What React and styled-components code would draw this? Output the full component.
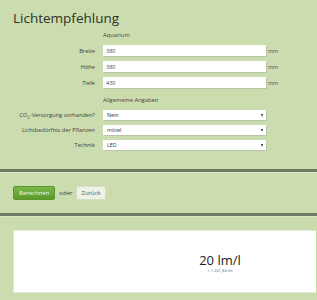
import React from 'react';
import styled, { createGlobalStyle } from 'styled-components';

const GlobalStyle = createGlobalStyle`
  html, body {
    margin: 0;
    padding: 0;
    overflow: hidden;
    background: #cbdcae;
    font-family: "Open Sans", "Liberation Sans", sans-serif;
    color: #3a3a3a;
  }
`;

const Page = styled.div`
  width: 317px;
  min-height: 300px;
  background: #cbdcae;
  overflow: hidden;
`;

const Title = styled.h1`
  margin: 0;
  padding: 9px 0 0 13px;
  font-size: 13.5px;
  line-height: 19px;
  font-weight: 400;
  color: #2e332a;
`;

const Form = styled.div`
  display: grid;
  grid-template-columns: 103px 163px auto;
  align-items: center;
  row-gap: 5px;
  padding-top: 3px;
`;

const Heading = styled.div`
  grid-column: 2 / 4;
  font-size: 5.8px;
  line-height: 9px;
  color: #444;
  margin-top: ${(p) => p.$top || 0}px;
`;

const Label = styled.label`
  grid-column: 1;
  text-align: right;
  padding-right: 8px;
  font-size: 5.7px;
  line-height: 10px;
  color: #3f3f3f;

  sub {
    font-size: 4px;
    line-height: 0;
  }
`;

const Input = styled.input`
  grid-column: 2;
  box-sizing: border-box;
  width: 163px;
  height: 11px;
  margin: 0;
  padding: 0 0 0 3px;
  border: none;
  background: #fff;
  box-shadow: 1px 1px 0 #b9c6a7;
  font-family: inherit;
  font-size: 5.5px;
  color: #444;
  outline: none;
`;

const Unit = styled.span`
  grid-column: 3;
  padding-left: 2px;
  font-size: 5.5px;
  color: #555;
`;

const SelectBox = styled.div`
  grid-column: 2;
  display: flex;
  align-items: center;
  justify-content: space-between;
  box-sizing: border-box;
  width: 163px;
  height: 10px;
  padding: 0 3px 0 4px;
  background: #fff;
  box-shadow: 1px 1px 0 #b9c6a7;
  font-size: 5.3px;
  color: #333;
`;

const Arrow = styled.span`
  width: 0;
  height: 0;
  border-left: 1.5px solid transparent;
  border-right: 1.5px solid transparent;
  border-top: 3px solid #222;
`;

const Divider = styled.hr`
  margin: ${(p) => p.$top}px 0 0;
  height: 0;
  border: none;
  border-top: 3px solid #6c7a65;
  border-bottom: 1px solid #dde8c9;
`;

const Actions = styled.div`
  display: flex;
  align-items: center;
  gap: 4px;
  padding: 13px 0 0 13px;
  height: 14px;
`;

const Button = styled.button`
  box-sizing: border-box;
  height: 14px;
  margin: 0;
  padding: 0 ${(p) => (p.$primary ? 5 : 4)}px;
  border-radius: 2px;
  border: 1px solid ${(p) => (p.$primary ? '#5a9530' : '#d6dec9')};
  background: ${(p) =>
    p.$primary ? 'linear-gradient(#7bb84a, #5c9a2d)' : '#edf2e5'};
  color: ${(p) => (p.$primary ? '#f2f8ea' : '#555')};
  font-family: inherit;
  font-size: 6px;
  line-height: 12px;
`;

const Or = styled.span`
  font-size: 6px;
  color: #444;
`;

const Result = styled.div`
  box-sizing: border-box;
  height: 63px;
  margin: 13px 1px 0 13px;
  background: #fff;
  border: 1px solid #e2e9d6;
  border-right: none;
  display: flex;
  flex-direction: column;
  align-items: center;
  padding: 22px 0 0 110px;
`;

const Value = styled.div`
  font-size: 13px;
  line-height: 15px;
  color: #222;
`;

const Sub = styled.div`
  font-size: 4px;
  line-height: 6px;
  color: #666;
`;

const dims = [
  ['Breite', '380'],
  ['Höhe', '380'],
  ['Tiefe', '430'],
];

const general = [
  [<>CO<sub>2</sub>-Versorgung vorhanden?</>, 'Nein'],
  ['Lichtbedürfnis der Pflanzen', 'mittel'],
  ['Technik', 'LED'],
];

export default function App() {
  return (
    <Page>
      <GlobalStyle />
      <Title>Lichtempfehlung</Title>
      <Form>
        <Heading>Aquarium</Heading>
        {dims.map(([label, value]) => (
          <React.Fragment key={label}>
            <Label>{label}</Label>
            <Input defaultValue={value} />
            <Unit>mm</Unit>
          </React.Fragment>
        ))}
        <Heading $top={3}>Allgemeine Angaben</Heading>
        {general.map(([label, value], i) => (
          <React.Fragment key={i}>
            <Label>{label}</Label>
            <SelectBox>
              <span>{value}</span>
              <Arrow />
            </SelectBox>
          </React.Fragment>
        ))}
      </Form>
      <Divider $top={19} />
      <Actions>
        <Button $primary>Berechnen</Button>
        <Or>oder</Or>
        <Button>Zurück</Button>
      </Actions>
      <Divider $top={13} />
      <Result>
        <Value>20 lm/l</Value>
        <Sub>≈ 1.241,84 lm</Sub>
      </Result>
    </Page>
  );
}
